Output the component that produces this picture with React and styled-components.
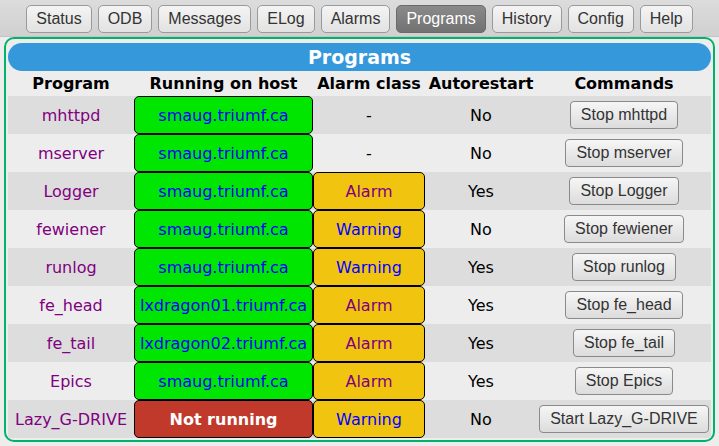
import styled, { createGlobalStyle } from "styled-components";

const GlobalStyle = createGlobalStyle`
  body {
    margin: 0;
    background: #ededed;
    font-family: "DejaVu Sans", Verdana, sans-serif;
  }
`;

const navItems = ["Status", "ODB", "Messages", "ELog", "Alarms", "Programs", "History", "Config", "Help"];

const programs = [
  { name: "mhttpd", host: "smaug.triumf.ca", alarm: null, auto: "No", cmd: "Stop mhttpd" },
  { name: "mserver", host: "smaug.triumf.ca", alarm: null, auto: "No", cmd: "Stop mserver" },
  { name: "Logger", host: "smaug.triumf.ca", alarm: "Alarm", auto: "Yes", cmd: "Stop Logger" },
  { name: "fewiener", host: "smaug.triumf.ca", alarm: "Warning", auto: "No", cmd: "Stop fewiener" },
  { name: "runlog", host: "smaug.triumf.ca", alarm: "Warning", auto: "Yes", cmd: "Stop runlog" },
  { name: "fe_head", host: "lxdragon01.triumf.ca", alarm: "Alarm", auto: "Yes", cmd: "Stop fe_head" },
  { name: "fe_tail", host: "lxdragon02.triumf.ca", alarm: "Alarm", auto: "Yes", cmd: "Stop fe_tail" },
  { name: "Epics", host: "smaug.triumf.ca", alarm: "Alarm", auto: "Yes", cmd: "Stop Epics" },
  { name: "Lazy_G-DRIVE", host: null, alarm: "Warning", auto: "No", cmd: "Start Lazy_G-DRIVE" },
];

const App = () => {
  return (
    <>
      <GlobalStyle />
      <NavBar>
        {navItems.map((item) => (
          <NavButton key={item} $active={item === "Programs"}>
            {item}
          </NavButton>
        ))}
      </NavBar>
      <Panel>
        <Title>Programs</Title>
        <HeaderRow>
          <span>Program</span>
          <span>Running on host</span>
          <span>Alarm class</span>
          <span>Autorestart</span>
          <span>Commands</span>
        </HeaderRow>
        {programs.map((p, i) => (
          <Row key={p.name} $odd={i % 2 === 0}>
            <ProgName>{p.name}</ProgName>
            {p.host ? (
              <StatusBox $kind="running">{p.host}</StatusBox>
            ) : (
              <StatusBox $kind="stopped">Not running</StatusBox>
            )}
            {p.alarm ? (
              <StatusBox $kind={p.alarm === "Alarm" ? "alarm" : "warning"}>{p.alarm}</StatusBox>
            ) : (
              <Plain>-</Plain>
            )}
            <Plain>{p.auto}</Plain>
            <Plain>
              <CmdButton>{p.cmd}</CmdButton>
            </Plain>
          </Row>
        ))}
      </Panel>
    </>
  );
};

const NavBar = styled.div`
  display: flex;
  justify-content: center;
  gap: 6px;
  height: 37px;
  box-sizing: border-box;
  padding-top: 5px;
  background: linear-gradient(#dcdcdc, #d0d0d0);
  border-bottom: 1px solid #c4c4c4;
`;

const NavButton = styled.div`
  height: 28px;
  box-sizing: border-box;
  padding: 0 9px;
  display: flex;
  align-items: center;
  border: 1px solid ${(p) => (p.$active ? "#6a6a6a" : "#9a9a9a")};
  border-radius: 5px;
  background: ${(p) =>
    p.$active ? "linear-gradient(#8a8a8a, #727272)" : "linear-gradient(#f4f4f4, #e2e2e2)"};
  color: ${(p) => (p.$active ? "#ffffff" : "#333333")};
  font-family: "Liberation Sans", Arial, sans-serif;
  font-size: 16px;
`;

const Panel = styled.div`
  margin: 0 4px;
  padding: 4px 2px 2px;
  border: 2px solid #00b26b;
  border-radius: 10px;
  background: #ededed;
`;

const Title = styled.div`
  height: 28px;
  border-radius: 14px;
  background: #3498db;
  color: #ffffff;
  font-weight: bold;
  font-size: 19px;
  display: flex;
  align-items: center;
  justify-content: center;
`;

const columns = "126px 179px 112px 112px 1fr";

const HeaderRow = styled.div`
  display: grid;
  grid-template-columns: ${columns};
  height: 25px;
  align-items: center;
  font-weight: bold;
  font-size: 16px;
  color: #000;
  text-align: center;
`;

const Row = styled.div`
  display: grid;
  grid-template-columns: ${columns};
  height: 38px;
  background: ${(p) => (p.$odd ? "#dddddd" : "#ededed")};
  font-size: 16px;
`;

const Plain = styled.div`
  display: flex;
  align-items: center;
  justify-content: center;
  color: #000;
`;

const ProgName = styled(Plain)`
  color: #800080;
`;

const kinds = {
  running: { bg: "#00e600", fg: "#0000ff", weight: "normal" },
  stopped: { bg: "#c0392b", fg: "#ffffff", weight: "bold" },
  alarm: { bg: "#f1c40f", fg: "#800080", weight: "normal" },
  warning: { bg: "#f1c40f", fg: "#0000ff", weight: "normal" },
};

const StatusBox = styled.div`
  display: flex;
  align-items: center;
  justify-content: center;
  box-sizing: border-box;
  border: 1px solid #000;
  border-radius: 5px;
  background: ${(p) => kinds[p.$kind].bg};
  color: ${(p) => kinds[p.$kind].fg};
  font-weight: ${(p) => kinds[p.$kind].weight};
  white-space: nowrap;
`;

const CmdButton = styled.div`
  height: 28px;
  box-sizing: border-box;
  padding: 0 10px;
  display: flex;
  align-items: center;
  border: 1px solid #8a8a8a;
  border-radius: 4px;
  background: linear-gradient(#f6f6f6, #dcdcdc);
  color: #333333;
  font-family: "Liberation Sans", Arial, sans-serif;
  font-size: 16px;
  white-space: nowrap;
`;

export default App;
